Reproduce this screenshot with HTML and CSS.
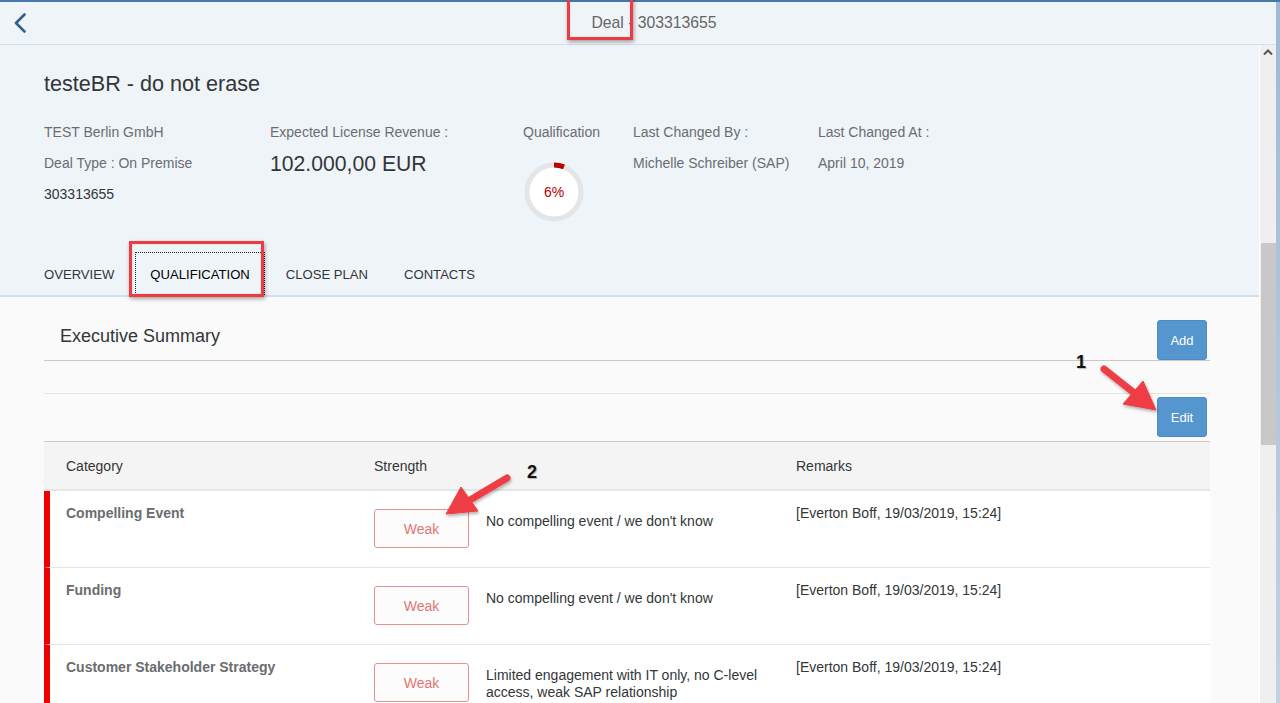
FILE: index.html
```html
<!DOCTYPE html>
<html lang="en">
<head>
<meta charset="utf-8">
<title>Deal - 303313655</title>
<link rel="stylesheet" href="styles.css">
</head>
<body>
<div class="window">
  <div class="app">
    <header class="shell">
      <button class="back" aria-label="Back">
        <svg width="14" height="20" viewBox="0 0 14 20"><path d="M11.5 1.5 L3 10 L11.5 18.5" fill="none" stroke="#346187" stroke-width="2.6" stroke-linecap="round" stroke-linejoin="round"/></svg>
      </button>
      <div class="shell-title">Deal - 303313655</div>
    </header>
    <div class="main">
      <div class="page">
        <section class="obj-header">
          <h1 class="obj-title">testeBR - do not erase</h1>
          <div class="attrs">
            <div class="col col1">
              <div class="lbl">TEST Berlin GmbH</div>
              <div class="lbl">Deal Type : On Premise</div>
              <div class="val">303313655</div>
            </div>
            <div class="col col2">
              <div class="lbl">Expected License Revenue :</div>
              <div class="big">102.000,00 EUR</div>
            </div>
            <div class="col col3">
              <div class="lbl">Qualification</div>
              <div class="donut">
                <svg width="60" height="60" viewBox="0 0 60 60">
                  <circle cx="30" cy="30" r="27" fill="#fff" stroke="#e3e5e6" stroke-width="5"/>
                  <circle cx="30" cy="30" r="27" fill="none" stroke="#bb0000" stroke-width="5" stroke-dasharray="10.2 200" transform="rotate(-90 30 30)"/>
                </svg>
                <span class="donut-val">6%</span>
              </div>
            </div>
            <div class="col col4">
              <div class="lbl">Last Changed By :</div>
              <div class="lbl">Michelle Schreiber (SAP)</div>
            </div>
            <div class="col col5">
              <div class="lbl">Last Changed At :</div>
              <div class="lbl">April 10, 2019</div>
            </div>
          </div>
          <nav class="tabs">
            <div class="tab">OVERVIEW</div>
            <div class="tab tab-selected">QUALIFICATION</div>
            <div class="tab">CLOSE PLAN</div>
            <div class="tab">CONTACTS</div>
          </nav>
        </section>
        <section class="content">
          <div class="panel-head">
            <h2 class="panel-title">Executive Summary</h2>
            <button class="btn">Add</button>
          </div>
          <div class="toolbar-empty"></div>
          <div class="toolbar"><button class="btn btn-edit">Edit</button></div>
          <div class="table">
            <div class="thead">
              <div class="th">Category</div>
              <div class="th">Strength</div>
              <div class="th">Remarks</div>
            </div>
            <div class="row">
              <div class="cell cat">Compelling Event</div>
              <div class="cell strength"><span class="weak">Weak</span><span class="desc">No compelling event / we don't know</span></div>
              <div class="cell remark">[Everton Boff, 19/03/2019, 15:24]</div>
            </div>
            <div class="row">
              <div class="cell cat">Funding</div>
              <div class="cell strength"><span class="weak">Weak</span><span class="desc">No compelling event / we don't know</span></div>
              <div class="cell remark">[Everton Boff, 19/03/2019, 15:24]</div>
            </div>
            <div class="row">
              <div class="cell cat">Customer Stakeholder Strategy</div>
              <div class="cell strength"><span class="weak">Weak</span><span class="desc">Limited engagement with IT only, no C-level access, weak SAP relationship</span></div>
              <div class="cell remark">[Everton Boff, 19/03/2019, 15:24]</div>
            </div>
          </div>
        </section>
      </div>
      <div class="scrollbar">
        <div class="sb-up"><svg width="10" height="6" viewBox="0 0 10 6"><path d="M1 5.5 L5 1.5 L9 5.5" fill="none" stroke="#555" stroke-width="2"/></svg></div>
        <div class="sb-thumb"></div>
      </div>
    </div>
  </div>
  <div class="frame"></div>
</div>

<div class="mark mark-deal"></div>
<div class="mark mark-tab"></div>
<span class="num num1">1</span>
<span class="num num2">2</span>
<svg class="arrows" width="1280" height="703" viewBox="0 0 1280 703">
  <defs>
    <filter id="sh" x="-20%" y="-20%" width="140%" height="140%">
      <feDropShadow dx="1" dy="2" stdDeviation="1.5" flood-color="#000" flood-opacity="0.3"/>
    </filter>
  </defs>
  <g filter="url(#sh)" fill="#ef3e45" stroke="#ef3e45">
    <line x1="1104" y1="369" x2="1133" y2="392" stroke-width="7" stroke-linecap="round"/>
    <polygon points="1156,410 1123,404 1143,381" stroke-width="1" stroke-linejoin="round"/>
    <line x1="507" y1="478" x2="470" y2="500" stroke-width="7" stroke-linecap="round"/>
    <polygon points="446,514 461,487 478,511" stroke-width="1" stroke-linejoin="round"/>
  </g>
</svg>
</body>
</html>
```

FILE: styles.css
```css
* { box-sizing: border-box; }

html, body {
  margin: 0;
  padding: 0;
  width: 1280px;
  height: 703px;
  overflow: hidden;
}

body {
  position: relative;
  font-family: "Liberation Sans", Arial, sans-serif;
  font-size: 14px;
  color: #32363a;
  background: #fafafa;
}

.window {
  display: flex;
  height: 703px;
  border-top: 2px solid #4579ae;
}

.app {
  flex: 1;
  display: flex;
  flex-direction: column;
  min-width: 0;
}

.frame {
  width: 4px;
  background: linear-gradient(to bottom, #9fb9d4, #c3d2e2);
}

/* Shell bar */
.shell {
  height: 43px;
  display: flex;
  align-items: center;
  background: #eff4f9;
  border-bottom: 1px solid #d3e1ee;
}

.back {
  width: 40px;
  height: 43px;
  border: 0;
  background: transparent;
  padding: 0 0 0 13px;
  display: flex;
  align-items: center;
}

.shell-title {
  flex: 1;
  text-align: center;
  font-size: 15.75px;
  color: #666;
  padding-right: 8px;
}

/* Main */
.main {
  flex: 1;
  display: flex;
  min-height: 0;
}

.page {
  flex: 1;
  overflow: hidden;
  background: #fafafa;
}

.scrollbar {
  width: 17px;
  border-left: 1px solid #fff;
  background: #efefef;
  display: flex;
  flex-direction: column;
  align-items: center;
}

.sb-up {
  height: 17px;
  display: flex;
  align-items: center;
  justify-content: center;
  padding-bottom: 3px;
}

.sb-thumb {
  width: 15px;
  height: 202px;
  margin-top: 181px;
  background: #c8c8c8;
}

/* Object header */
.obj-header {
  background: #eff4f9;
  padding: 26px 0 0 44px;
  border-bottom: 2px solid #d1dfed;
}

.obj-title {
  margin: 0;
  font-size: 21.6px;
  line-height: 26px;
  font-weight: normal;
  color: #32363a;
}

.attrs {
  display: flex;
  margin-top: 20px;
}

.col { line-height: 31px; }
.col1 { width: 226px; }
.col2 { width: 253px; }
.col3 { width: 110px; }
.col4 { width: 185px; }
.col5 { width: 200px; }

.lbl { color: #6a6d70; }
.val { color: #32363a; }

.big {
  font-size: 21.2px;
  color: #32363a;
}

.donut {
  position: relative;
  width: 60px;
  height: 60px;
  margin-top: 14px;
  margin-left: 1px;
}

.donut svg { display: block; }

.donut-val {
  position: absolute;
  inset: 0;
  display: flex;
  align-items: center;
  justify-content: center;
  color: #bb0000;
  font-size: 14px;
  line-height: 1;
}

.tabs {
  display: flex;
  margin: 30px 0 0 -15px;
  height: 43px;
}

.tab {
  padding: 2px 15px 0;
  margin-right: 6px;
  line-height: 41px;
  font-size: 13.1px;
  color: #32363a;
}

.tab-selected {
  outline: 1px dotted #222;
  outline-offset: -1px;
  color: #000;
}

/* Content */
.content {
  padding: 0 49px 0 44px;
}

.panel-head {
  height: 64px;
  display: flex;
  justify-content: space-between;
  align-items: flex-end;
  border-bottom: 1px solid #c9c9c9;
}

.panel-title {
  align-self: flex-start;
  margin: 28px 0 0 16px;
  font-size: 18px;
  line-height: 22px;
  font-weight: normal;
  color: #32363a;
}

.btn {
  width: 50px;
  height: 40px;
  margin-right: 3px;
  border: 1px solid #4b8ac4;
  border-radius: 3px;
  background: #5496cd;
  color: #fff;
  font-family: "Liberation Sans", Arial, sans-serif;
  font-size: 13px;
  padding: 0;
}

.toolbar-empty {
  height: 33px;
  border-bottom: 1px solid #e5e5e5;
}

.toolbar {
  height: 48px;
  display: flex;
  justify-content: flex-end;
  align-items: flex-start;
  border-bottom: 1px solid #cccccc;
}

.btn-edit { margin-top: 3px; }

.thead {
  display: grid;
  grid-template-columns: 314px 422px 1fr;
  height: 49px;
  background: #f4f4f4;
  border-bottom: 2px solid #e5e5e5;
  align-items: center;
}

.th { padding-left: 22px; color: #32363a; }
.th + .th { padding-left: 16px; }

.row {
  display: grid;
  grid-template-columns: 308px 422px 1fr;
  min-height: 77px;
  background: #fff;
  border-left: 6px solid #ee0000;
  border-bottom: 1px solid #e5e5e5;
}

.cell {
  padding: 13px 0 0 16px;
  line-height: 18px;
}

.cat {
  font-weight: bold;
  color: #6a6d70;
}

.strength {
  display: flex;
  align-items: flex-start;
  padding-top: 18px;
}

.weak {
  flex: none;
  width: 95px;
  height: 39px;
  display: flex;
  align-items: center;
  justify-content: center;
  border: 1px solid #e39090;
  border-radius: 3px;
  background: #fcfcfc;
  color: #e27575;
  padding-top: 1px;
}

.desc {
  margin: 4px 0 0 17px;
  width: 285px;
  line-height: 17px;
  color: #32363a;
}

.remark { color: #32363a; }

/* Annotations */
.mark {
  position: absolute;
  border: 3px solid #ee3b42;
  box-shadow: 1px 2px 4px rgba(0,0,0,0.35), inset 0 0 2px rgba(0,0,0,0.15);
  pointer-events: none;
}

.mark-deal {
  left: 567px;
  top: -3px;
  width: 66px;
  height: 43px;
}

.mark-tab {
  left: 129px;
  top: 241px;
  width: 135px;
  height: 56px;
}

.num {
  position: absolute;
  font-family: "Liberation Sans", Arial, sans-serif;
  font-weight: bold;
  font-size: 18px;
  line-height: 20px;
  color: #111;
  text-shadow: 1px 1px 1px rgba(0,0,0,0.25);
}

.num1 { left: 1076px; top: 352px; }
.num2 { left: 527px; top: 462px; }

.arrows {
  position: absolute;
  left: 0;
  top: 0;
  pointer-events: none;
}
```
